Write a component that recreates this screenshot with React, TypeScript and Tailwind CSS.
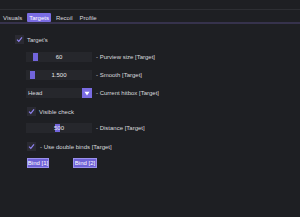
import React from "react";

const tabs = ["Visuals", "Targets", "Recoil", "Profile"];

function Check({ checked = true }: { checked?: boolean }) {
  return (
    <div className="w-[9px] h-[9px] bg-[#2a2a32] flex items-center justify-center shrink-0">
      {checked && (
        <svg width="7" height="7" viewBox="0 0 7 7">
          <polyline
            points="1,3.6 2.8,5.4 6,1.4"
            fill="none"
            stroke="#8f82f0"
            strokeWidth="1.2"
          />
        </svg>
      )}
    </div>
  );
}

function Slider({ value, grab, label }: { value: string; grab: number; label: string }) {
  return (
    <div className="flex items-center h-[10px]">
      <div className="relative w-[66px] h-[10px] bg-[#26272c]">
        <div
          className="absolute top-[1px] w-[5px] h-[8px] bg-[#7265dc]"
          style={{ left: grab }}
        />
        <div className="absolute inset-0 flex items-center justify-center text-[#e6e6ea]">
          {value}
        </div>
      </div>
      <span className="ml-[4px]">{label}</span>
    </div>
  );
}

export default function App() {
  return (
    <div className="w-[300px] h-[217px] bg-[#1e1f23] text-[6px] leading-none text-[#dadade] font-['Liberation_Sans',sans-serif] overflow-hidden">
      <div className="h-[9px]" />
      <div className="h-px bg-[#2d2e33]" />

      <div className="flex items-stretch h-[9px] mt-[3px] pl-[1px] gap-[3px]">
        {tabs.map((t) => (
          <div
            key={t}
            className={`px-[2px] flex items-center ${
              t === "Targets" ? "bg-[#7a6ce2] text-white rounded-[1px]" : ""
            }`}
          >
            {t}
          </div>
        ))}
      </div>
      <div className="h-[2px] bg-[#36324c]" />

      <div className="flex flex-col">
        <div className="flex items-center mt-[11px] pl-[15px] h-[9px]">
          <Check />
          <span className="ml-[3px]">Target's</span>
        </div>

        <div className="pl-[26px] flex flex-col">
          <div className="mt-[8px]">
            <Slider value="60" grab={7} label="- Purview size [Target]" />
          </div>
          <div className="mt-[8px]">
            <Slider value="1.500" grab={4} label="- Smooth [Target]" />
          </div>

          <div className="mt-[8px] flex items-center h-[10px]">
            <div className="w-[66px] h-[10px] bg-[#26272c] flex items-center">
              <span className="pl-[2px] flex-1">Head</span>
              <div className="w-[10px] h-[10px] bg-[#7a6ce2] flex items-center justify-center">
                <svg width="6" height="5" viewBox="0 0 6 5">
                  <polygon points="0.5,0.8 5.5,0.8 3,4.4" fill="#ffffff" />
                </svg>
              </div>
            </div>
            <span className="ml-[4px]">- Current hitbox [Target]</span>
          </div>

          <div className="mt-[9px] flex items-center h-[9px] pl-[1px]">
            <Check />
            <span className="ml-[3px]">Visible check</span>
          </div>

          <div className="mt-[7px]">
            <Slider value="500" grab={29} label="- Distance [Target]" />
          </div>

          <div className="mt-[9px] flex items-center h-[9px] pl-[1px]">
            <Check />
            <span className="ml-[4px]">- Use double binds [Target]</span>
          </div>

          <div className="mt-[7px] flex items-center pl-[1px]">
            <button className="w-[22px] h-[10px] bg-[#6f62d6] border border-[#9a90ee] text-white text-[6px] leading-none flex items-center justify-center whitespace-nowrap">
              Bind [1]
            </button>
            <button className="ml-[24px] w-[24px] h-[10px] bg-[#6f62d6] border border-[#9a90ee] text-white text-[6px] leading-none flex items-center justify-center whitespace-nowrap">
              Bind [2]
            </button>
          </div>
        </div>
      </div>
    </div>
  );
}
